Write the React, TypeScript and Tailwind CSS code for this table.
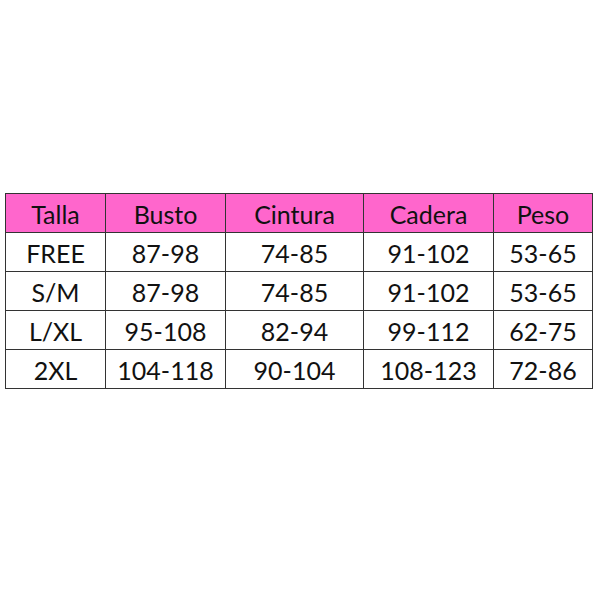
const headers = ["Talla", "Busto", "Cintura", "Cadera", "Peso"];
const widths = ["w-[100px]", "w-[120px]", "w-[138px]", "w-[130px]", "w-[99px]"];

const rows = [
  ["FREE", "87-98", "74-85", "91-102", "53-65"],
  ["S/M", "87-98", "74-85", "91-102", "53-65"],
  ["L/XL", "95-108", "82-94", "99-112", "62-75"],
  ["2XL", "104-118", "90-104", "108-123", "72-86"],
];

export default function App() {
  return (
    <div className="w-[600px] h-[600px] bg-white pt-[193px] pl-[5px] font-['Lato','Open_Sans',sans-serif] text-[25px] text-[#111]">
      <table className="border-collapse table-fixed">
        <thead>
          <tr className="bg-[#ff66cc] h-[39px]">
            {headers.map((h, i) => (
              <th key={h} className={`${widths[i]} border border-[#333] font-normal text-center leading-none pt-[2px]`}>
                {h}
              </th>
            ))}
          </tr>
        </thead>
        <tbody>
          {rows.map((r) => (
            <tr key={r[0]} className="h-[39px]">
              {r.map((c, i) => (
                <td key={i} className={`${widths[i]} border border-[#333] text-center leading-none pt-[2px]`}>
                  {c}
                </td>
              ))}
            </tr>
          ))}
        </tbody>
      </table>
    </div>
  );
}
